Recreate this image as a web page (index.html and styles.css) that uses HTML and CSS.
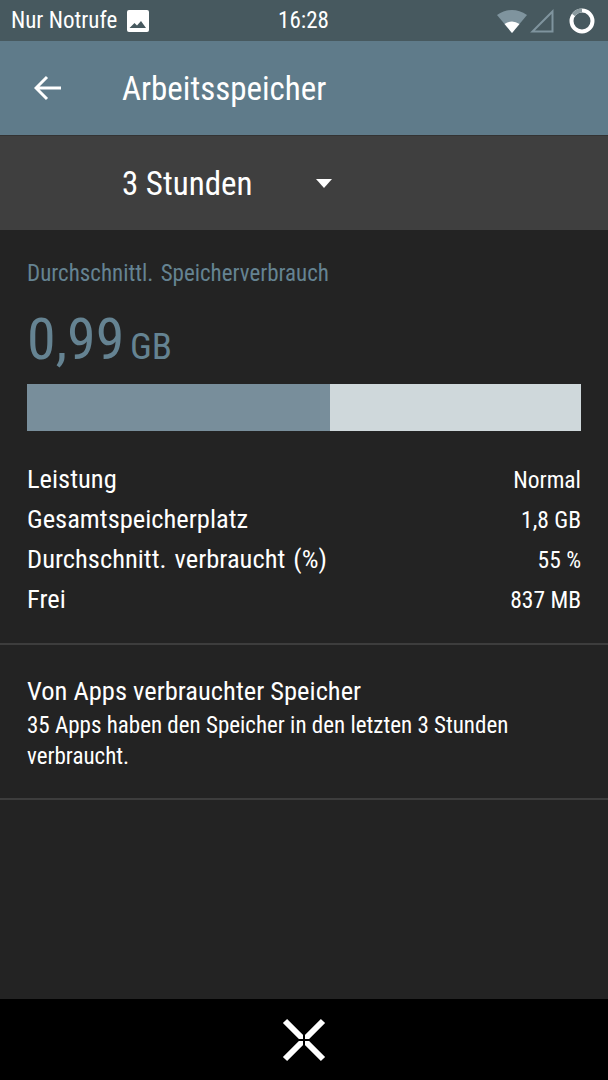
FILE: index.html
```html
<!DOCTYPE html>
<html lang="de">
<head>
    <meta charset="UTF-8">
    <title>Arbeitsspeicher</title>
    <link rel="stylesheet" href="styles.css">
</head>
<body>
    <div class="status-bar">
        <div class="status-left">
            <span>Nur Notrufe</span>
            <svg class="status-pic" width="22" height="22" viewBox="0 0 22 22">
                <rect width="22" height="22" rx="2" fill="#fff"/>
                <path d="M2.500 18l5-5 2.500 2.500 4-4.500 5 7z" fill="#47595f"/>
            </svg>
        </div>
        <div class="status-time">16:28</div>
        <div class="status-right">
            <svg width="30" height="24" viewBox="0 0 30 24">
                <path d="M0 6Q15-4 30 6L15 24z" fill="#7f949e"/>
                <path d="M7.500 15Q15 10 22.500 15L15 24z" fill="#fff"/>
            </svg>
            <svg class="signal" width="24" height="24" viewBox="0 0 24 24">
                <path d="M22.500 2.500V22.500H2.500z" fill="none" stroke="#7f949e" stroke-width="2"/>
            </svg>
            <svg class="ring" width="28" height="28" viewBox="0 0 28 28">
                <circle cx="14" cy="14" r="10.500" fill="none" stroke="#fff" stroke-width="4"/>
                <path d="M14 3.500A10.500 10.500 0 0 0 5.500 8" fill="none" stroke="#8a9a9f" stroke-width="4"/>
            </svg>
        </div>
    </div>

    <div class="app-bar">
        <svg class="back-icon" width="28" height="26" viewBox="0 0 28 26">
            <path d="M27 13H2M13 2L2 13l11 11" fill="none" stroke="#fff" stroke-width="3"/>
        </svg>
        <span class="app-title">Arbeitsspeicher</span>
    </div>

    <div class="range-bar">
        <span class="range-label">3 Stunden</span>
        <span class="range-arrow"></span>
    </div>

    <main class="content">
        <section class="summary">
            <div class="summary-label">Durchschnittl. Speicherverbrauch</div>
            <div class="summary-value"><span class="big">0,99</span> <span class="unit">GB</span></div>
            <div class="usage-bar"><div class="usage-fill" style="width: 54.700%"></div></div>
            <div class="stat-row"><span class="stat-name">Leistung</span><span class="stat-val">Normal</span></div>
            <div class="stat-row"><span class="stat-name">Gesamtspeicherplatz</span><span class="stat-val">1,8 GB</span></div>
            <div class="stat-row"><span class="stat-name">Durchschnitt. verbraucht (%)</span><span class="stat-val">55 %</span></div>
            <div class="stat-row"><span class="stat-name">Frei</span><span class="stat-val">837 MB</span></div>
        </section>
        <section class="apps">
            <div class="apps-title">Von Apps verbrauchter Speicher</div>
            <div class="apps-text">35 Apps haben den Speicher in den letzten 3 Stunden verbraucht.</div>
        </section>
    </main>

    <div class="nav-bar">
        <svg width="44" height="44" viewBox="0 0 44 44">
            <path d="M3 3L41 41M41 3L3 41" stroke="#fff" stroke-width="6" fill="none"/>
            <path d="M22 0V44M0 22H44" stroke="#000" stroke-width="2" fill="none"/>
        </svg>
    </div>
</body>
</html>
```

FILE: styles.css
```css
body {
    margin: 0;
    width: 608px;
    height: 1080px;
    display: flex;
    flex-direction: column;
    overflow: hidden;
    background-color: #232323;
    color: #fff;
    font-family: Roboto, "Liberation Sans", sans-serif;
    font-stretch: 75%;
    font-weight: 440;
}
.status-bar {
    height: 41px;
    flex: none;
    display: grid;
    grid-template-columns: 1fr auto 1fr;
    align-items: center;
    padding: 0 12px 0 11px;
    background-color: #47595f;
    font-size: 23px;
}
.status-left {
    display: flex;
    align-items: center;
    gap: 10px;
}
.status-right {
    display: flex;
    justify-content: flex-end;
    align-items: center;
    gap: 3px;
}
.signal {
    margin-right: 11px;
}
.app-bar {
    height: 94px;
    flex: none;
    display: flex;
    align-items: center;
    background-color: #5f7b8a;
}
.back-icon {
    margin-left: 34px;
}
.app-title {
    margin-left: 60px;
    font-size: 33px;
}
.range-bar {
    height: 95px;
    flex: none;
    display: flex;
    align-items: center;
    background-color: #3f3f3f;
    border-top: 1px solid #333;
    box-sizing: border-box;
}
.range-label {
    margin-left: 122px;
    font-size: 33px;
    width: 194px;
}
.range-arrow {
    width: 0;
    height: 0;
    border-left: 8px solid transparent;
    border-right: 8px solid transparent;
    border-top: 9px solid #fff;
}
.content {
    flex: 1;
}
.summary {
    padding: 31px 27px 24px;
    border-bottom: 2px solid #3d3d3d;
}
.summary-label {
    font-size: 23px;
    line-height: 26px;
    word-spacing: 2px;
    color: #658392;
}
.summary-value {
    margin-top: 15px;
    height: 82px;
    line-height: 74px;
    color: #658392;
}
.big {
    font-size: 58px;
}
.unit {
    margin-left: 2px;
    font-size: 37px;
}
.usage-bar {
    height: 47px;
    margin-bottom: 28px;
    background-color: #cfd8db;
}
.usage-fill {
    height: 100%;
    background-color: #788e9b;
}
.stat-row {
    display: flex;
    justify-content: space-between;
    align-items: baseline;
    height: 40px;
    line-height: 40px;
    font-size: 26.500px;
}
.stat-name {
    word-spacing: 2px;
}
.stat-val {
    font-size: 23.500px;
}
.apps {
    padding: 29px 27px 26px;
    border-bottom: 2px solid #3d3d3d;
}
.apps-title {
    margin-bottom: 2px;
    font-size: 26.500px;
    line-height: 34px;
}
.apps-text {
    font-size: 23px;
    line-height: 31px;
    max-width: 500px;
}
.nav-bar {
    height: 81px;
    flex: none;
    display: flex;
    align-items: center;
    justify-content: center;
    background-color: #000;
}
```
